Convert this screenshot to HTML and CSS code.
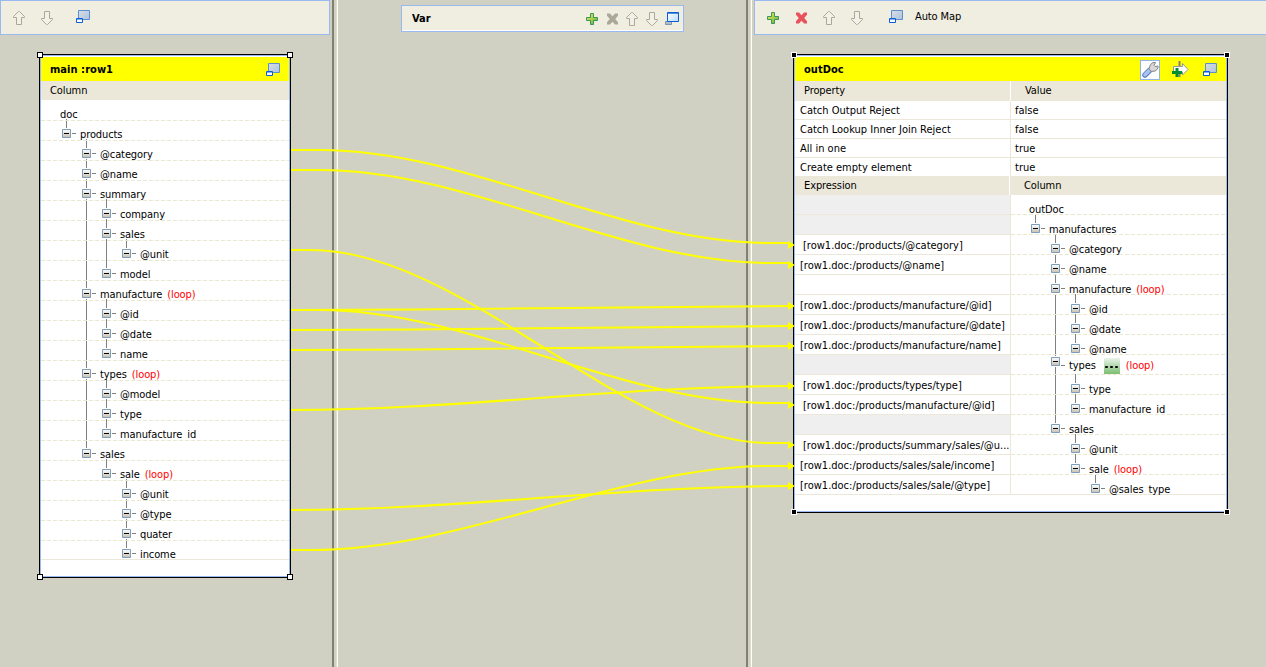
FILE: index.html
```
<!DOCTYPE html>
<html lang="en">
<head>
<meta charset="utf-8">
<title>Map editor</title>
<link rel="stylesheet" href="styles.css">
</head>
<body>
<svg class="defs" width="0" height="0">
  <defs>
    <linearGradient id="gGreen" x1="0" y1="0" x2="1" y2="1"><stop offset="0" stop-color="#f0f060"/><stop offset="1" stop-color="#5cae35"/></linearGradient>
    <linearGradient id="gBlue" x1="0" y1="0" x2="1" y2="1"><stop offset="0" stop-color="#d8dde4"/><stop offset="1" stop-color="#aec3dd"/></linearGradient>
    <linearGradient id="gSky" x1="0" y1="0" x2="1" y2="1"><stop offset="0" stop-color="#ffffff"/><stop offset="1" stop-color="#b8dcff"/></linearGradient>
    <linearGradient id="gBox" x1="0" y1="0" x2="0" y2="1"><stop offset="0" stop-color="#ffffff"/><stop offset="1" stop-color="#c8c0b0"/></linearGradient>
    <symbol id="up" viewBox="0 0 14 16"><path d="M6.500 1.500h1L12.500 6.500v1H9.500V14.500H4.500V7.500H1.500v-1z" fill="#f3f1e7" stroke="#aca899"/></symbol>
    <symbol id="down" viewBox="0 0 14 16"><path d="M6.500 14.500h1L12.500 9.500v-1H9.500V1.500H4.500V8.500H1.500v1z" fill="#f3f1e7" stroke="#aca899"/></symbol>
    <symbol id="plus" viewBox="0 0 12 12"><path d="M4.500.5h3v4h4v3h-4v4h-3v-4h-4v-3h4z" fill="url(#gGreen)" stroke="#3a945c"/></symbol>
    <symbol id="cross" viewBox="0 0 13 12"><path d="M1 .5h3l2.500 2.800L9 .5h3v2.300L9.200 6l2.800 3.200v2.300H9L6.500 8.700 4 11.500H1V9.200L3.800 6 1 2.800z" fill="currentColor"/></symbol>
    <symbol id="win" viewBox="0 0 15 14"><path d="M2.500.5h11v9h-11z" fill="url(#gBlue)" stroke="#5a90cc"/><path d="M.5 8.500h6v4h-6z" fill="#fff" stroke="#0a5fd8"/><path d="M1 9.500h5" stroke="#80b0f0"/></symbol>
    <symbol id="winmax" viewBox="0 0 15 14"><path d="M.5 9.500h6v3h-6z" fill="#b4bcc4" stroke="#8393ad"/><path d="M2.500.5h11v9h-11z" fill="url(#gSky)" stroke="#0a5fd8"/><path d="M2 1.200h12" stroke="#0a5fd8"/></symbol>
    <symbol id="box" viewBox="0 0 15 11"><path d="M0 0h11v11H0z" fill="#fff"/><path d="M1.500 1.500h8v8h-8z" fill="url(#gBox)" stroke="#7b9ebd"/><path d="M3 5.500h5" stroke="#000"/><path d="M11 5.500h4" stroke="#808080"/></symbol>
  </defs>
</svg>
<main class="editor">
  <section class="pane pane-in">
    <div class="toolbar">
      <svg class="ar"><use href="#up"/></svg>
      <svg class="ar"><use href="#down"/></svg>
      <svg class="wn gap-l"><use href="#win"/></svg>
    </div>
  </section>
  <div class="sash"></div>
  <section class="pane pane-var">
    <div class="varbar">
      <b>Var</b>
      <span class="tools">
        <svg class="pl"><use href="#plus"/></svg>
        <svg class="cr grey"><use href="#cross"/></svg>
        <svg class="ar"><use href="#up"/></svg>
        <svg class="ar"><use href="#down"/></svg>
        <svg class="wn"><use href="#winmax"/></svg>
      </span>
    </div>
  </section>
  <div class="sash"></div>
  <section class="pane pane-out">
    <div class="toolbar">
      <svg class="pl"><use href="#plus"/></svg>
      <svg class="cr red"><use href="#cross"/></svg>
      <svg class="ar"><use href="#up"/></svg>
      <svg class="ar"><use href="#down"/></svg>
      <svg class="wn gap-l"><use href="#win"/></svg>
      <span class="automap">Auto Map</span>
    </div>
  </section>

  <article class="table input">
    <header class="title"><b>main :row1</b><svg class="wn"><use href="#win"/></svg></header>
    <div class="colhead">Column</div>
    <div class="tree">
      <svg class="lines" width="248" height="460"><path d="M25.500 18v10M45.500 38v310M65.500 98v70M85.500 138v10M65.500 198v50M65.500 278v50M65.500 358v10M85.500 378v70"/></svg>
      <div class="node l0"><span>doc</span></div>
      <div class="node l1"><svg><use href="#box"/></svg><span>products</span></div>
      <div class="node l2"><svg><use href="#box"/></svg><span>@category</span></div>
      <div class="node l2"><svg><use href="#box"/></svg><span>@name</span></div>
      <div class="node l2"><svg><use href="#box"/></svg><span>summary</span></div>
      <div class="node l3"><svg><use href="#box"/></svg><span>company</span></div>
      <div class="node l3"><svg><use href="#box"/></svg><span>sales</span></div>
      <div class="node l4"><svg><use href="#box"/></svg><span>@unit</span></div>
      <div class="node l3"><svg><use href="#box"/></svg><span>model</span></div>
      <div class="node l2"><svg><use href="#box"/></svg><span>manufacture</span><em>(loop)</em></div>
      <div class="node l3"><svg><use href="#box"/></svg><span>@id</span></div>
      <div class="node l3"><svg><use href="#box"/></svg><span>@date</span></div>
      <div class="node l3"><svg><use href="#box"/></svg><span>name</span></div>
      <div class="node l2"><svg><use href="#box"/></svg><span>types</span><em>(loop)</em></div>
      <div class="node l3"><svg><use href="#box"/></svg><span>@model</span></div>
      <div class="node l3"><svg><use href="#box"/></svg><span>type</span></div>
      <div class="node l3"><svg><use href="#box"/></svg><span>manufacture id</span></div>
      <div class="node l2"><svg><use href="#box"/></svg><span>sales</span></div>
      <div class="node l3"><svg><use href="#box"/></svg><span>sale</span><em>(loop)</em></div>
      <div class="node l4"><svg><use href="#box"/></svg><span>@unit</span></div>
      <div class="node l4"><svg><use href="#box"/></svg><span>@type</span></div>
      <div class="node l4"><svg><use href="#box"/></svg><span>quater</span></div>
      <div class="node l4 last"><svg><use href="#box"/></svg><span>income</span></div>
    </div>
    <i class="grip tl"></i><i class="grip tr"></i><i class="grip bl"></i><i class="grip br"></i>
  </article>

  <article class="table output">
    <header class="title"><b>outDoc</b>
      <span class="wrench"><svg width="18" height="18" viewBox="0 0 18 18"><path d="M4 14 8.500 9.500" stroke="#5f80c4" stroke-width="5.500" stroke-linecap="round"/><path d="M4 13.700 8.500 9.200" stroke="#a8c4ee" stroke-width="3.500" stroke-linecap="round"/><path d="M8 7.500 9.500 3.500 12 1.500h2.500l-1.500 3 1 1 3-.5v2l-2.500 3-4.500.5z" fill="#d8d8d8" stroke="#858585"/></svg></span>
      <svg class="addout" width="17" height="17" viewBox="0 0 17 17"><path d="M7.500 0v16" stroke="#808080" stroke-width="2"/><path d="M1.500 5.500h9v-3L16 8.500l-5.500 5.500v-3h-9z" fill="#fff" stroke="#999"/><path d="M0 11.500h10M5 7v9" stroke="#009030" stroke-width="3"/></svg>
      <svg class="wn"><use href="#win"/></svg></header>
    <div class="colhead two"><span>Property</span><span>Value</span></div>
    <div class="prop"><span>Catch Output Reject</span><span>false</span></div>
    <div class="prop"><span>Catch Lookup Inner Join Reject</span><span>false</span></div>
    <div class="prop"><span>All in one</span><span>true</span></div>
    <div class="prop short"><span>Create empty element</span><span>true</span></div>
    <div class="colhead two expr"><span>Expression</span><span>Column</span></div>
    <div class="mapping">
      <div class="exprs">
        <div class="off"></div>
        <div class="off"></div>
        <div class="in">[row1.doc:/products/@category]</div>
        <div>[row1.doc:/products/@name]</div>
        <div></div>
        <div>[row1.doc:/products/manufacture/@id]</div>
        <div>[row1.doc:/products/manufacture/@date]</div>
        <div>[row1.doc:/products/manufacture/name]</div>
        <div class="off"></div>
        <div class="in">[row1.doc:/products/types/type]</div>
        <div class="in">[row1.doc:/products/manufacture/@id]</div>
        <div class="off"></div>
        <div class="in">[row1.doc:/products/summary/sales/@u...</div>
        <div>[row1.doc:/products/sales/sale/income]</div>
        <div>[row1.doc:/products/sales/sale/@type]</div>
      </div>
      <div class="tree">
        <svg class="lines" width="214" height="300"><path d="M24.500 19v10M44.500 39v194M64.500 99v50M64.500 179v30M64.500 239v30M84.500 279v10"/></svg>
        <div class="node l0"><span>outDoc</span></div>
        <div class="node l1"><svg><use href="#box"/></svg><span>manufactures</span></div>
        <div class="node l2"><svg><use href="#box"/></svg><span>@category</span></div>
        <div class="node l2"><svg><use href="#box"/></svg><span>@name</span></div>
        <div class="node l2"><svg><use href="#box"/></svg><span>manufacture</span><em>(loop)</em></div>
        <div class="node l3"><svg><use href="#box"/></svg><span>@id</span></div>
        <div class="node l3"><svg><use href="#box"/></svg><span>@date</span></div>
        <div class="node l3"><svg><use href="#box"/></svg><span>@name</span></div>
        <div class="node l2 raised"><svg viewBox="0 0 15 15"><path d="M0 0h11v11H0z" fill="#fff"/><path d="M1.500 1.500h8v8h-8z" fill="url(#gBox)" stroke="#7b9ebd"/><path d="M3 5.500h5" stroke="#000"/><path d="M11 9.500h4" stroke="#808080"/></svg><span>types</span><i class="more"></i><em>(loop)</em></div>
        <div class="node l3"><svg><use href="#box"/></svg><span>type</span></div>
        <div class="node l3"><svg><use href="#box"/></svg><span>manufacture id</span></div>
        <div class="node l2"><svg><use href="#box"/></svg><span>sales</span></div>
        <div class="node l3"><svg><use href="#box"/></svg><span>@unit</span></div>
        <div class="node l3"><svg><use href="#box"/></svg><span>sale</span><em>(loop)</em></div>
        <div class="node l4 last"><svg><use href="#box"/></svg><span>@sales type</span></div>
      </div>
    </div>
    <i class="grip tl"></i><i class="grip tr"></i><i class="grip bl"></i><i class="grip br"></i>
  </article>

  <svg class="links" width="1266" height="667">
    <g fill="none" stroke="#ff0" stroke-width="2">
      <path d="M291 150H320C470 150 620 243 770 243H790"/>
      <path d="M291 170H320C470 170 620 263 770 263H790"/>
      <path d="M291 250H310C465 250 620 443 770 443H790"/>
      <path d="M291 310C457 310 622 306 790 306"/>
      <path d="M291 310H320C470 310 620 403 770 403H790"/>
      <path d="M291 330C457 330 622 326 790 326"/>
      <path d="M291 350C457 350 622 346 790 346"/>
      <path d="M291 410C457 410 622 386 790 386"/>
      <path d="M291 510C457 510 622 486 790 486"/>
      <path d="M291 550H310C465 550 620 466 770 466H790"/>
    </g>
    <path fill="#ff0" d="M788 241l7 4-7 4zM788 261l7 4-7 4zM788 302l7 4-7 4zM788 322l7 4-7 4zM788 342l7 4-7 4zM788 382l7 4-7 4zM788 401l7 4-7 4zM788 441l7 4-7 4zM788 462l7 4-7 4zM788 482l7 4-7 4z"/>
  </svg>
</main>
</body>
</html>
```
FILE: styles.css
```
* { box-sizing: border-box; }
body { margin: 0; background: #d1d1c3; color: #000; font: 11px/14px "DejaVu Sans Condensed", "DejaVu Sans", sans-serif; font-stretch: condensed; letter-spacing: -0.1px; }
svg { display: block; flex: none; overflow: visible; }
b { letter-spacing: 0.05px; }
.defs { position: absolute; }
.editor { position: relative; display: grid; grid-template-columns: 332px 6px 408px 6px 1fr; width: 1266px; height: 667px; overflow: hidden; }
.sash { border-left: 2px solid #808073; border-right: 1px solid #fffff4; box-shadow: inset -1px 0 #deddcf; }
.toolbar { display: flex; align-items: center; height: 35px; background: #f0eee1; border: 1px solid #9ab9f0; padding-left: 11px; gap: 14px; }
.pane-in .toolbar { width: 330px; }
.pane-out { padding-left: 2px; }
.pane-out .toolbar { border-right: 0; padding-left: 12px; gap: 0; }
.pane-out .pl { margin-right: 16px; }
.pane-out .cr { margin-right: 14px; }
.pane-out .ar + .ar { margin-left: 14px; }
.toolbar .gap-l { margin-left: 8px; margin-bottom: 1px; }
.pane-out .toolbar .gap-l { margin-left: 25px; }
.automap { margin-left: 11px; padding-bottom: 1px; }
.ar { width: 14px; height: 16px; }
.wn { width: 15px; height: 14px; }
.pl { width: 12px; height: 12px; }
.cr { width: 13px; height: 12px; }
.grey { color: #aca899; }
.red { color: #e8525a; }
.pane-var { padding: 5px 0 0 63px; }
.varbar { display: flex; justify-content: space-between; align-items: center; width: 283px; height: 27px; padding: 0 3px 0 10px; background: #f0eee1; border: 1px solid #9ab9f0; box-shadow: inset 0 -1px #fff; }
.varbar b { padding-top: 1px; }
.tools { display: flex; align-items: center; gap: 6px; }
.tools .pl { margin-right: 2px; }

.table { position: absolute; background: #fff; border: 1px solid #000; box-shadow: inset 0 0 0 1px #9ab9f0; top: 54px; padding: 2px 1px 1px; }
.input { left: 39px; width: 252px; height: 524px; }
.output { left: 793px; width: 435px; height: 459px; }
.title { display: flex; align-items: center; height: 25px; margin-bottom: -1px; background: #ff0; padding: 0 7px 0 9px; }
.title b { margin-right: auto; padding-top: 1px; }
.wrench { width: 20px; height: 20px; background: #fff; border: 1px solid #8fb2f0; }
.addout { margin: 0 14px 0 12px; }
.title .wn { margin-right: 1px; }
.title .wrench { margin-left: 0; }
.colhead { position: relative; height: 19px; background: #ebe8d9; padding: 3px 9px 0; }
.two { display: grid; grid-template-columns: 215px 1fr; height: 20px; padding: 0; }
.two span { padding: 3px 9px 0; }
.two span + span { border-left: 1px solid #fff; padding-left: 14px; }
.expr { grid-template-columns: 214px 1fr; height: 19px; }
.prop { display: grid; grid-template-columns: 215px 1fr; height: 19px; border-bottom: 1px solid #ebe8d9; letter-spacing: 0; }
.prop span { padding: 3px 5px 0; }
.prop span + span { border-left: 1px solid #ebe8d9; padding-left: 4px; }
.short { height: 18px; border-bottom: 0; }
.mapping { display: grid; grid-template-columns: 216px 1fr; }
.exprs { border-right: 1px solid #ebe8d9; letter-spacing: 0; }
.exprs div { height: 20px; border-bottom: 1px solid #ebe8d9; padding: 4px 0 0 5px; white-space: nowrap; }
.exprs .in { padding-left: 8px; }
.exprs .off { background: #efefef; }

.tree { position: relative; }
.input .tree { padding-top: 1px; }
.lines { position: absolute; left: 0; top: 1px; fill: none; stroke: #808080; }
.output .lines { top: 0; }
.node { position: relative; display: flex; height: 20px; white-space: nowrap; background: repeating-linear-gradient(90deg, #ebe8d0 0 4px, transparent 4px 6px) 0 100% / 100% 1px no-repeat; }
.node svg { width: 15px; height: 11px; margin: 7px 4px 0 0; }
.output .node svg { margin-top: 8px; }
.node span { padding-top: 7px; height: 20px; word-spacing: 2px; }
.node em { padding: 7px 0 0 5px; font-style: normal; color: #f00; }
.input .l0 { padding-left: 19px; }
.l1 { padding-left: 20px; }
.l2 { padding-left: 40px; }
.l3 { padding-left: 60px; }
.l4 { padding-left: 80px; }
.output .l0 { padding-left: 18px; }
.output .l1 { padding-left: 19px; }
.output .l2 { padding-left: 39px; }
.output .l3 { padding-left: 59px; }
.output .l4 { padding-left: 79px; }
.output .node span, .output .node em { padding-top: 8px; }
.output .raised svg { height: 15px; margin-top: 1px; }
.output .raised span, .output .raised em { padding-top: 4px; }
.more { width: 16px; height: 16px; margin: 3px 1px 0 8px; background: radial-gradient(circle, #000 1px, transparent 1.500px) 0 6px / 5px 6px repeat-x, linear-gradient(#eaf4ea, #7dbd72); }
.last { background: linear-gradient(#ebe8d9, #ebe8d9) 0 100% / 100% 1px no-repeat; }
.input .last { height: 19px; }

.grip { position: absolute; width: 6px; height: 6px; background: #fff; border: 1px solid #000; }
.output .grip { background: #000; border-color: #fff; }
.tl { left: -3px; top: -3px; }
.tr { right: -3px; top: -3px; }
.bl { left: -3px; bottom: -3px; }
.br { right: -3px; bottom: -3px; }
.links { position: absolute; left: 0; top: 0; }
```
